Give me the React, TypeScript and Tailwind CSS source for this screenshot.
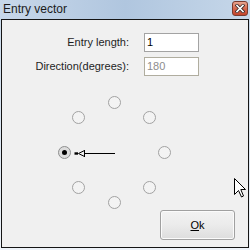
import React from "react";

const font = { fontFamily: '"Liberation Sans", Arial, sans-serif' };

function Radio({ left, top, checked }: { left: number; top: number; checked?: boolean }) {
  return (
    <div
      className={
        "absolute w-[13px] h-[13px] rounded-full border flex items-center justify-center " +
        (checked ? "border-[#8e8f8f] bg-[#dcdcdc]" : "border-[#a2a2a2] bg-[#f3f3f3]")
      }
      style={{ left, top }}
    >
      {checked && <div className="w-[5px] h-[5px] rounded-full bg-black" />}
    </div>
  );
}

export default function App() {
  const cx = 112.3;
  const cy = 56.5;
  const pts = [
    { a: 90, r: 50 },
    { a: 135, r: 50 },
    { a: 45, r: 50 },
    { a: 180, r: 50 },
    { a: 0, r: 50 },
    { a: 225, r: 50 },
    { a: 315, r: 50 },
    { a: 270, r: 50 },
  ];
  return (
    <div
      className="relative w-[250px] h-[250px] overflow-hidden flex flex-col bg-gradient-to-b from-[#c9d9ea] via-[#dbe6f2] to-[#eef3f9]"
      style={font}
    >
      <div className="h-[19px] flex items-start justify-between bg-gradient-to-r from-[#c8d8ea] via-[#b0c6df] to-[#c6d7e9]">
        <div className="pl-[3px] pt-[1px] text-[12px] leading-[16px] text-[#1b1b1b]">Entry vector</div>
        <div className="mt-[1px] mr-[2px] w-[16px] h-[15px] rounded-[3px] border border-[#7a3a2e] bg-gradient-to-b from-[#e8a692] via-[#d6674d] to-[#c2432b] flex items-center justify-center">
          <svg width="10" height="9" viewBox="0 0 10 9">
            <path d="M2 1.5 L8 7.5 M8 1.5 L2 7.5" stroke="#3b2a2a" strokeWidth="3.2" strokeLinecap="square" />
            <path d="M2 1.5 L8 7.5 M8 1.5 L2 7.5" stroke="#ffffff" strokeWidth="1.6" strokeLinecap="square" />
          </svg>
        </div>
      </div>
      <div className="ml-[1px] w-[248px] h-[229px] border border-[#151515] bg-[#f0f0f0] flex flex-col">
        <div className="pt-[13px] flex flex-col gap-[5px] text-[11px]">
          <div className="flex justify-end items-center gap-[15px] pr-[49px]">
            <span className="text-[#1e1e1e]">Entry length:</span>
            <div className="w-[55px] h-[19px] border border-[#a3a3a3] bg-white flex items-center pl-[2px] text-black">1</div>
          </div>
          <div className="flex justify-end items-center gap-[15px] pr-[49px]">
            <span className="text-[#1e1e1e]">Direction(degrees):</span>
            <div className="w-[55px] h-[19px] border border-[#b0ad9f] bg-white flex items-center pl-[2px] text-[#8d8d8d]">180</div>
          </div>
        </div>
        <div className="relative mt-[20px] w-[246px] h-[114px]">
          {pts.map((p, i) => {
            const rad = (p.a * Math.PI) / 180;
            const x = cx + p.r * Math.cos(rad);
            const y = cy - p.r * Math.sin(rad);
            return <Radio key={i} left={Math.round(x - 6.5)} top={Math.round(y - 6.5)} checked={p.a === 180} />;
          })}
          <svg className="absolute left-0 top-0" width="246" height="114" viewBox="0 0 246 114">
            <g transform="translate(-2,-97)">
              <path d="M84 154.5 H115" stroke="#000" strokeWidth="1" />
              <path d="M74.5 154.5 H78" stroke="#000" strokeWidth="2.4" />
              <path d="M78.5 154.5 L84.5 151.5 M78.5 154.5 L84.5 157.5 M84.5 151 V158" stroke="#000" strokeWidth="1" fill="none" />
            </g>
          </svg>
        </div>
        <div className="flex justify-end pr-[13px]">
          <div className="w-[75px] h-[30px] rounded-[3px] border border-[#a0a0a0] bg-gradient-to-b from-[#f2f2f2] via-[#ebebeb] to-[#dddddd] flex items-center justify-center text-[11px] text-black shadow-[inset_0_0_0_1px_#fbfbfb]">
            <span>
              <span className="underline">O</span>k
            </span>
          </div>
        </div>
      </div>
      <svg className="absolute left-[234px] top-[178px]" width="13" height="20" viewBox="0 0 13 20">
        <path d="M0.5 0.5 V16.5 L4.5 12.5 L7.5 19 L9.5 18 L6.8 11.5 H11.5 Z" fill="#fff" stroke="#000" strokeWidth="1" strokeLinejoin="miter" />
      </svg>
    </div>
  );
}
